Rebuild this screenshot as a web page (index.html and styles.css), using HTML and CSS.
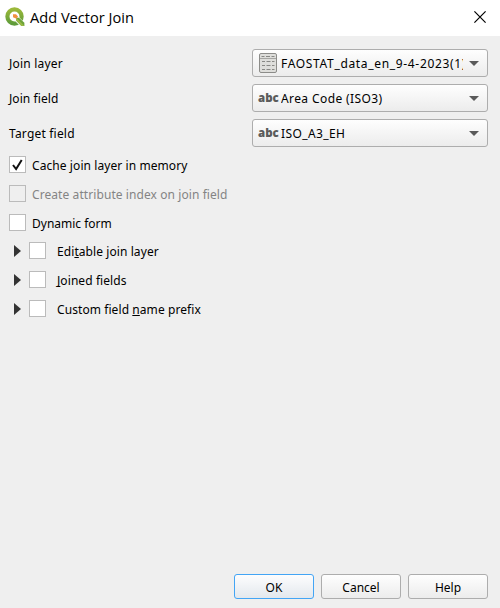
FILE: index.html
```html
<!DOCTYPE html>
<html lang="en">
<head>
<meta charset="utf-8">
<title>Add Vector Join</title>
<link rel="stylesheet" href="styles.css">
</head>
<body>
<div class="dialog">
  <header class="titlebar">
    <svg class="logo" width="20" height="20" viewBox="0 0 20 20">
      <defs><linearGradient id="g" x1="0" y1="0" x2="0" y2="1"><stop offset="0" stop-color="#9bb83a"/><stop offset="1" stop-color="#5f9c3a"/></linearGradient></defs>
      <circle cx="9.500" cy="9.500" r="7.100" fill="none" stroke="url(#g)" stroke-width="4.200"/>
      <path d="M11 11l8 8" stroke="#fff" stroke-width="5.500"/>
      <path fill="#6da33a" d="M11.300 10.800h2.700l5.400 5v3.200h-3L11.300 13.700z"/>
      <path fill="#9aba45" d="M11.300 10.800l8.100 8.200h-3L11.300 13.700z"/>
      <path fill="#f0913f" d="M8 7.300h3l2 2.200-1.500 2.200L8 10.300z"/>
    </svg>
    <h1 class="title">Add Vector Join</h1>
    <svg class="close" width="12" height="12" viewBox="0 0 12 12"><path d="M.4.4l11.200 11.200M11.600.4L.4 11.600" stroke="#000" stroke-width="1.200"/></svg>
  </header>
  <main class="content">
    <div class="row">
      <span class="label wide">Join layer</span>
      <div class="combo">
        <svg class="table-icon" width="18" height="20" viewBox="0 0 18 20">
          <rect x=".5" y=".5" width="17" height="19" rx="1.500" fill="#dededb" stroke="#8c8c89"/>
          <path d="M1 5.500h16" stroke="#a5a5a2" fill="none"/>
          <path d="M2.500 3.500h3M7 3.500h4M12.500 3.500h3M3 8.500h3M7.500 8.500h4M13 8.500h2.500M3 12.500h3M7.500 12.500h4M13 12.500h2.500M3 16.500h3M7.500 16.500h4M13 16.500h2.500" stroke="#888885"/>
        </svg>
        <span class="value file">FAOSTAT_data_en_9-4-2023(1)</span>
        <i class="arrow"></i>
      </div>
    </div>
    <div class="row">
      <span class="label">Join field</span>
      <div class="combo"><span class="abc">abc</span><span class="value">Area Code (ISO3)</span><i class="arrow"></i></div>
    </div>
    <div class="row">
      <span class="label wide">Target field</span>
      <div class="combo"><span class="abc">abc</span><span class="value">ISO_A3_EH</span><i class="arrow"></i></div>
    </div>
    <div class="checks">
      <label class="check"><span class="box"><svg width="11" height="12" viewBox="0 0 11 12"><path d="M1 6l3.100 4L9.700 1" fill="none" stroke="#111" stroke-width="2"/></svg></span><span class="text">Cache join layer in memory</span></label>
      <label class="check disabled"><span class="box"></span><span class="text">Create attribute index on join field</span></label>
      <label class="check"><span class="box"></span><span class="text dynamic">Dynamic form</span></label>
    </div>
    <div class="groups">
      <div class="group"><i class="expand"></i><span class="box"></span><span class="text">Edi<u>t</u>able join layer</span></div>
      <div class="group"><i class="expand"></i><span class="box"></span><span class="text"><u>J</u>oined fields</span></div>
      <div class="group"><i class="expand"></i><span class="box"></span><span class="text">Custom field <u>n</u>ame prefix</span></div>
    </div>
  </main>
  <footer class="buttons">
    <button class="button default">OK</button>
    <button class="button">Cancel</button>
    <button class="button">Help</button>
  </footer>
</div>
</body>
</html>
```
FILE: styles.css
```css
* { box-sizing: border-box; }
body { margin: 0; background: #efefef; color: #000; font: 12px/16px "Noto Sans", sans-serif; }
.dialog { width: 500px; height: 608px; display: flex; flex-direction: column; }
.titlebar { height: 36px; background: #fff; display: flex; align-items: center; padding: 0 14px 2px 5px; }
.logo { display: block; }
.title { margin: 0 auto 0 5px; padding-bottom: 1px; font: 400 14.600px/20px "Open Sans", sans-serif; white-space: nowrap; }
.content { flex: 1; padding: 13px 12px 0 9px; }
.row { display: flex; align-items: center; justify-content: space-between; height: 28px; margin-bottom: 7px; }
.label, .text, .value { white-space: nowrap; padding-top: 2px; letter-spacing: 0.080px; }
.label.wide { letter-spacing: 0.200px; }
.text.dynamic { letter-spacing: 0; }
.combo { width: 236px; height: 28px; border: 1px solid #adadad; border-radius: 3px; background: linear-gradient(#fefefe, #ececec); display: flex; align-items: center; padding: 0 8px 0 6px; }
.table-icon { flex: none; margin-right: 4px; }
.abc { width: 22px; flex: none; margin-left: -1px; margin-right: 1px; padding-bottom: 1px; font: 800 11.500px/16px "Open Sans", sans-serif; color: #5b5b5b; }
.value { width: 182px; overflow: hidden; letter-spacing: 0.400px; }
.value.file { letter-spacing: 0.670px; }
.arrow { margin-left: auto; border: 5px solid transparent; border-top-color: #5a5a5a; border-bottom: 0; }
.checks { margin-top: 9px; display: grid; gap: 12px; }
.check { display: flex; align-items: center; gap: 6px; height: 17px; }
.box { width: 17px; height: 17px; flex: none; border: 1px solid #bbb; background: #fff; display: flex; align-items: center; justify-content: center; }
.disabled { color: #848484; }
.disabled .box { background: #efefef; }
.groups { margin-top: 11px; padding-left: 5px; display: grid; gap: 12px; }
.group { display: flex; align-items: center; height: 17px; }
.group .text { margin-left: 11px; }
u { text-decoration-skip-ink: none; }
.expand { width: 7px; margin-right: 8px; border: 6px solid transparent; border-left: 7px solid #333; border-right: 0; }
.buttons { display: flex; justify-content: flex-end; gap: 7px; padding: 0 12px 9px; }
.button { width: 80px; height: 25px; border: 1px solid #adadad; border-radius: 3px; padding: 2px 0 0; background: linear-gradient(#fefefe, #ececec); font: inherit; color: #000; }
.default { border-color: #43a5f5; background: linear-gradient(#fdfdfe, #e3e8ed); }
```
